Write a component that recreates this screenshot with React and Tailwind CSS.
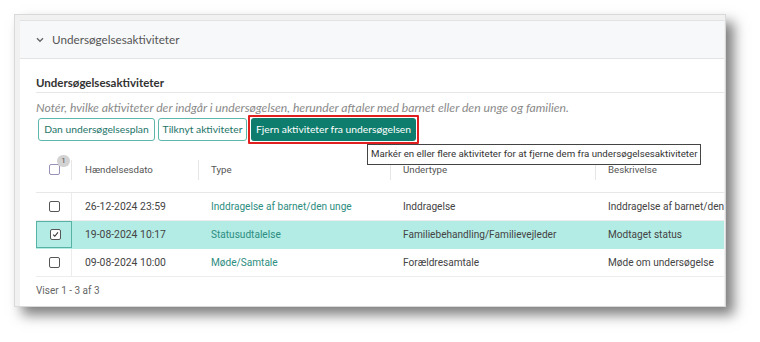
import React from "react";

const rows = [
  { date: "26-12-2024 23:59", type: "Inddragelse af barnet/den unge", sub: "Inddragelse", desc: "Inddragelse af barnet/den unge", sel: false },
  { date: "19-08-2024 10:17", type: "Statusudtalelse", sub: "Familiebehandling/Familievejleder", desc: "Modtaget status", sel: true },
  { date: "09-08-2024 10:00", type: "Møde/Samtale", sub: "Forældresamtale", desc: "Møde om undersøgelse", sel: false },
];

function Box({ checked, header }) {
  return (
    <span
      className={
        "flex h-[11px] w-[11px] items-center justify-center rounded-[2px] border bg-white " +
        (header ? "border-[#9a90b8]" : "border-[#555]")
      }
    >
      {checked && (
        <svg width="7" height="7" viewBox="0 0 8 8">
          <path d="M1.3 4.2 L3.2 6 L6.8 1.6" fill="none" stroke="#333" strokeWidth="1.2" />
        </svg>
      )}
    </span>
  );
}

export default function App() {
  return (
    <div className="h-[342px] w-[760px] bg-white pl-[14px] pt-[14px]" style={{ fontFamily: "Lato, sans-serif" }}>
      <div className="flex h-[293px] w-[712px] flex-col border border-[#d9d9d9] bg-[#f1f1f1] pl-[5px] pr-[1px] pt-[5px] shadow-[8px_8px_12px_rgba(0,0,0,0.5)]">
        <div className="flex min-h-0 flex-1 flex-col overflow-hidden border-t border-[#e2e2e2] bg-white">
          <div className="flex h-[38px] shrink-0 items-center gap-[8px] border-b border-[#e3e3e3] bg-[#f7f8fa] pl-[16px]">
            <svg width="8" height="6" viewBox="0 0 8 6">
              <path d="M1 1.2 L4 4.2 L7 1.2" fill="none" stroke="#666" strokeWidth="1.4" />
            </svg>
            <span className="whitespace-nowrap text-[11.7px] text-[#555]">Undersøgelsesaktiviteter</span>
          </div>
          <div className="relative flex flex-1 flex-col pl-[16px]">
            <div className="flex h-[34px] shrink-0 items-end border-b border-[#e6e6e6] pb-[1px] text-[11.5px] font-bold text-[#333]">
              Undersøgelsesaktiviteter
            </div>
            <div className="mt-[8px] shrink-0 whitespace-nowrap text-[12.2px] italic leading-[14px] text-[#8a8a8a]">
              Notér, hvilke aktiviteter der indgår i undersøgelsen, herunder aftaler med barnet eller den unge og familien.
            </div>
            <div className="flex shrink-0 items-center pl-[2px]">
              <button className="h-[23px] w-[117px] whitespace-nowrap rounded-[3px] border border-[#5db7aa] bg-white text-[10.3px] text-[#1d7468]">
                Dan undersøgelsesplan
              </button>
              <button className="ml-[3px] h-[23px] w-[89px] whitespace-nowrap rounded-[3px] border border-[#5db7aa] bg-white text-[10.3px] text-[#1d7468]">
                Tilknyt aktiviteter
              </button>
              <div className="ml-[1px] rounded-[1px] border-2 border-[#e0201f] p-[1px]">
                <button className="block h-[23px] w-[165px] whitespace-nowrap rounded-[3px] bg-[#0e7d6d] text-[10.3px] text-white">
                  Fjern aktiviteter fra undersøgelsen
                </button>
              </div>
            </div>
            <div className="mt-[3px] shrink-0" style={{ fontFamily: "Roboto, sans-serif" }}>
              <div className="flex h-[46px] items-center border-b border-[#e8e8e8] text-[9.7px] text-[#555]">
                <div className="flex h-[20px] w-[36px] items-center border-r border-[#e6e6e6] pl-[13px]">
                  <span className="relative">
                    <Box header />
                    <span className="absolute left-[8px] top-[-9px] flex h-[12px] w-[13px] items-center justify-center rounded-full bg-[#d2d2d2] text-[8px] text-[#555]">
                      1
                    </span>
                  </span>
                </div>
                <div className="h-[20px] w-[127px] border-r border-[#e6e6e6] pl-[13px] leading-[20px]">Hændelsesdato</div>
                <div className="h-[20px] w-[192px] border-r border-[#e6e6e6] pl-[12px] leading-[20px]">Type</div>
                <div className="h-[20px] w-[205px] border-r border-[#e6e6e6] pl-[12px] leading-[20px]">Undertype</div>
                <div className="h-[20px] flex-1 pl-[12px] leading-[20px]">Beskrivelse</div>
              </div>
              {rows.map((r) => (
                <div
                  key={r.date}
                  className={
                    "flex h-[28px] items-stretch whitespace-nowrap border-b text-[10.1px] text-[#444] " +
                    (r.sel ? "border-[#b3ebe5] bg-[#b3ebe5]" : "border-[#ececec]")
                  }
                >
                  <div
                    className={
                      "flex w-[36px] items-center pl-[13px] " +
                      (r.sel ? "border border-[#55b2a4] bg-[#b3ebe5] pl-[12px]" : "border-r border-[#ececec]")
                    }
                  >
                    <Box checked={r.sel} />
                  </div>
                  <div className="flex w-[127px] items-center pl-[13px] text-[10.4px]">{r.date}</div>
                  <div className="flex w-[192px] items-center pl-[12px] text-[#2c8d80]">{r.type}</div>
                  <div className="flex w-[205px] items-center pl-[12px]">{r.sub}</div>
                  <div className="flex flex-1 items-center overflow-hidden pl-[12px]">{r.desc}</div>
                </div>
              ))}
              <div className="pt-[6px] text-[10px] leading-[15px] text-[#666]">Viser 1 - 3 af 3</div>
            </div>
            <div
              className="absolute left-[347px] top-[85px] flex h-[21px] w-[334px] items-center whitespace-nowrap border border-[#444] bg-white pl-[3px] text-[9.7px] text-[#333]"
              style={{ fontFamily: "Roboto, sans-serif" }}
            >
              Markér en eller flere aktiviteter for at fjerne dem fra undersøgelsesaktiviteter
            </div>
          </div>
        </div>
      </div>
    </div>
  );
}
